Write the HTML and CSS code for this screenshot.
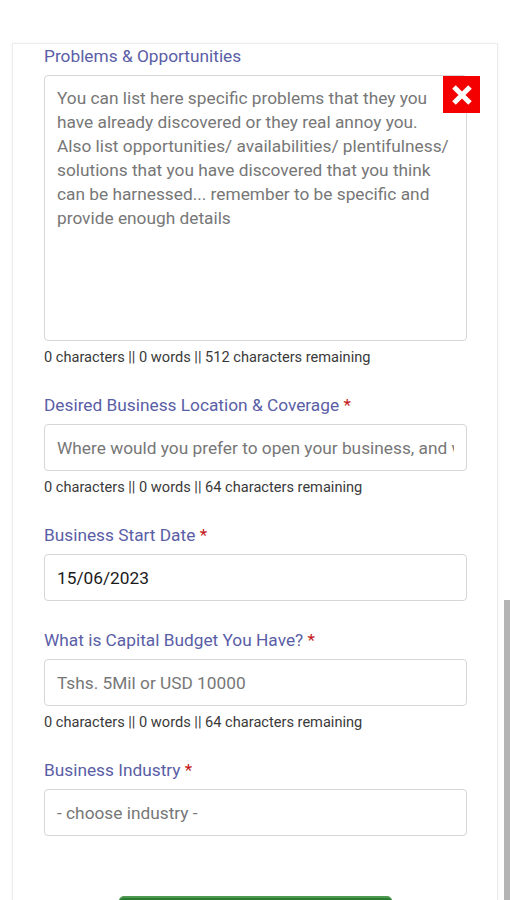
FILE: index.html
```html
<!DOCTYPE html>
<html lang="en">
<head>
    <meta charset="UTF-8">
    <meta name="viewport" content="width=device-width, initial-scale=1.0">
    <title>Business Idea Form</title>
    <link rel="stylesheet" href="styles.css">
</head>
<body>

    <!-- Form Card -->
    <div class="form-card">

        <!-- Problems & Opportunities -->
        <div class="field">
            <label class="field-label" for="problems">Problems &amp; Opportunities</label>
            <div class="textarea-wrap">
                <textarea id="problems" class="field-textarea" placeholder="You can list here specific problems that they you&#10;have already discovered or they real annoy you.&#10;Also list opportunities/ availabilities/ plentifulness/&#10;solutions that you have discovered that you think&#10;can be harnessed... remember to be specific and&#10;provide enough details"></textarea>
                <button class="close-button" type="button" aria-label="Remove">
                    <svg width="22" height="22" viewBox="0 0 22 22">
                        <path d="M3 3 L19 19 M19 3 L3 19" stroke="#fff" stroke-width="5" stroke-linecap="butt"/>
                    </svg>
                </button>
            </div>
            <div class="field-counter">0 characters || 0 words || 512 characters remaining</div>
        </div>

        <!-- Location -->
        <div class="field">
            <label class="field-label" for="location">Desired Business Location &amp; Coverage <span class="required">*</span></label>
            <input id="location" class="field-input" type="text" placeholder="Where would you prefer to open your business, and why?">
            <div class="field-counter">0 characters || 0 words || 64 characters remaining</div>
        </div>

        <!-- Start Date -->
        <div class="field">
            <label class="field-label" for="startDate">Business Start Date <span class="required">*</span></label>
            <input id="startDate" class="field-input field-input-filled" type="text" value="15/06/2023">
        </div>

        <!-- Budget -->
        <div class="field">
            <label class="field-label" for="budget">What is Capital Budget You Have? <span class="required">*</span></label>
            <input id="budget" class="field-input" type="text" placeholder="Tshs. 5Mil or USD 10000">
            <div class="field-counter">0 characters || 0 words || 64 characters remaining</div>
        </div>

        <!-- Industry -->
        <div class="field">
            <label class="field-label" for="industry">Business Industry <span class="required">*</span></label>
            <select id="industry" class="field-input field-select">
                <option>- choose industry -</option>
            </select>
        </div>

        <!-- Submit -->
        <div class="actions">
            <button class="submit-button" type="submit"></button>
        </div>
    </div>

    <!-- Scrollbar Thumb -->
    <div class="scroll-thumb"></div>

</body>
</html>
```

FILE: styles.css
```css
body {
    margin: 0;
    padding-top: 43px;
    background-color: #fff;
    font-family: Roboto, "Noto Sans", sans-serif;
    overflow: hidden;
    height: 900px;
}

/* Card */
.form-card {
    margin: 0 12px 0 12px;
    padding: 2px 30px 0 31px;
    border: 1px solid #ececec;
    border-bottom: none;
    box-shadow: 0 0 3px rgba(0, 0, 0, 0.06);
    background: #fff;
}

/* Fields */
.field {
    display: flex;
    flex-direction: column;
    margin-bottom: 29px;
}

.field-label {
    font-size: 17.3px;
    line-height: 20px;
    color: #5a5ea6;
    margin-bottom: 9px;
}

.required {
    color: #c41818;
}

.textarea-wrap {
    position: relative;
}

.field-textarea {
    display: block;
    box-sizing: border-box;
    width: 100%;
    height: 266px;
    margin: 0;
    padding: 10px 4px 10px 12px;
    border: 1px solid #d6d6d6;
    border-radius: 4px;
    font-family: Roboto, "Noto Sans", sans-serif;
    font-size: 17.3px;
    line-height: 24px;
    color: #222;
    resize: none;
    outline: none;
}

.field-textarea::placeholder,
.field-input::placeholder {
    color: #777;
    opacity: 1;
}

.close-button {
    position: absolute;
    top: 1px;
    right: -13px;
    width: 37px;
    height: 37px;
    padding: 0;
    border: none;
    background: #f40000;
    display: flex;
    align-items: center;
    justify-content: center;
    cursor: pointer;
}

.field-input {
    display: block;
    box-sizing: border-box;
    width: 100%;
    height: 47px;
    margin: 0;
    padding: 0 12px;
    border: 1px solid #d6d6d6;
    border-radius: 4px;
    background: #fff;
    font-family: Roboto, "Noto Sans", sans-serif;
    font-size: 17.3px;
    color: #222;
    outline: none;
}

.field-input-filled {
    color: #1a1a1a;
}

.field-select {
    appearance: none;
    -webkit-appearance: none;
    color: #777;
}

.field-counter {
    margin-top: 7px;
    font-size: 14.6px;
    line-height: 18px;
    color: #3a3a3a;
}

/* Submit */
.actions {
    display: flex;
    justify-content: center;
    padding-top: 31px;
}

.submit-button {
    width: 273px;
    height: 46px;
    border: none;
    border-radius: 5px;
    background: #2b7b30;
    border-top: 2px solid #4f9a52;
}

/* Scrollbar */
.scroll-thumb {
    position: fixed;
    top: 600px;
    right: 0;
    width: 6px;
    height: 300px;
    background: #b4b4b4;
}
```
